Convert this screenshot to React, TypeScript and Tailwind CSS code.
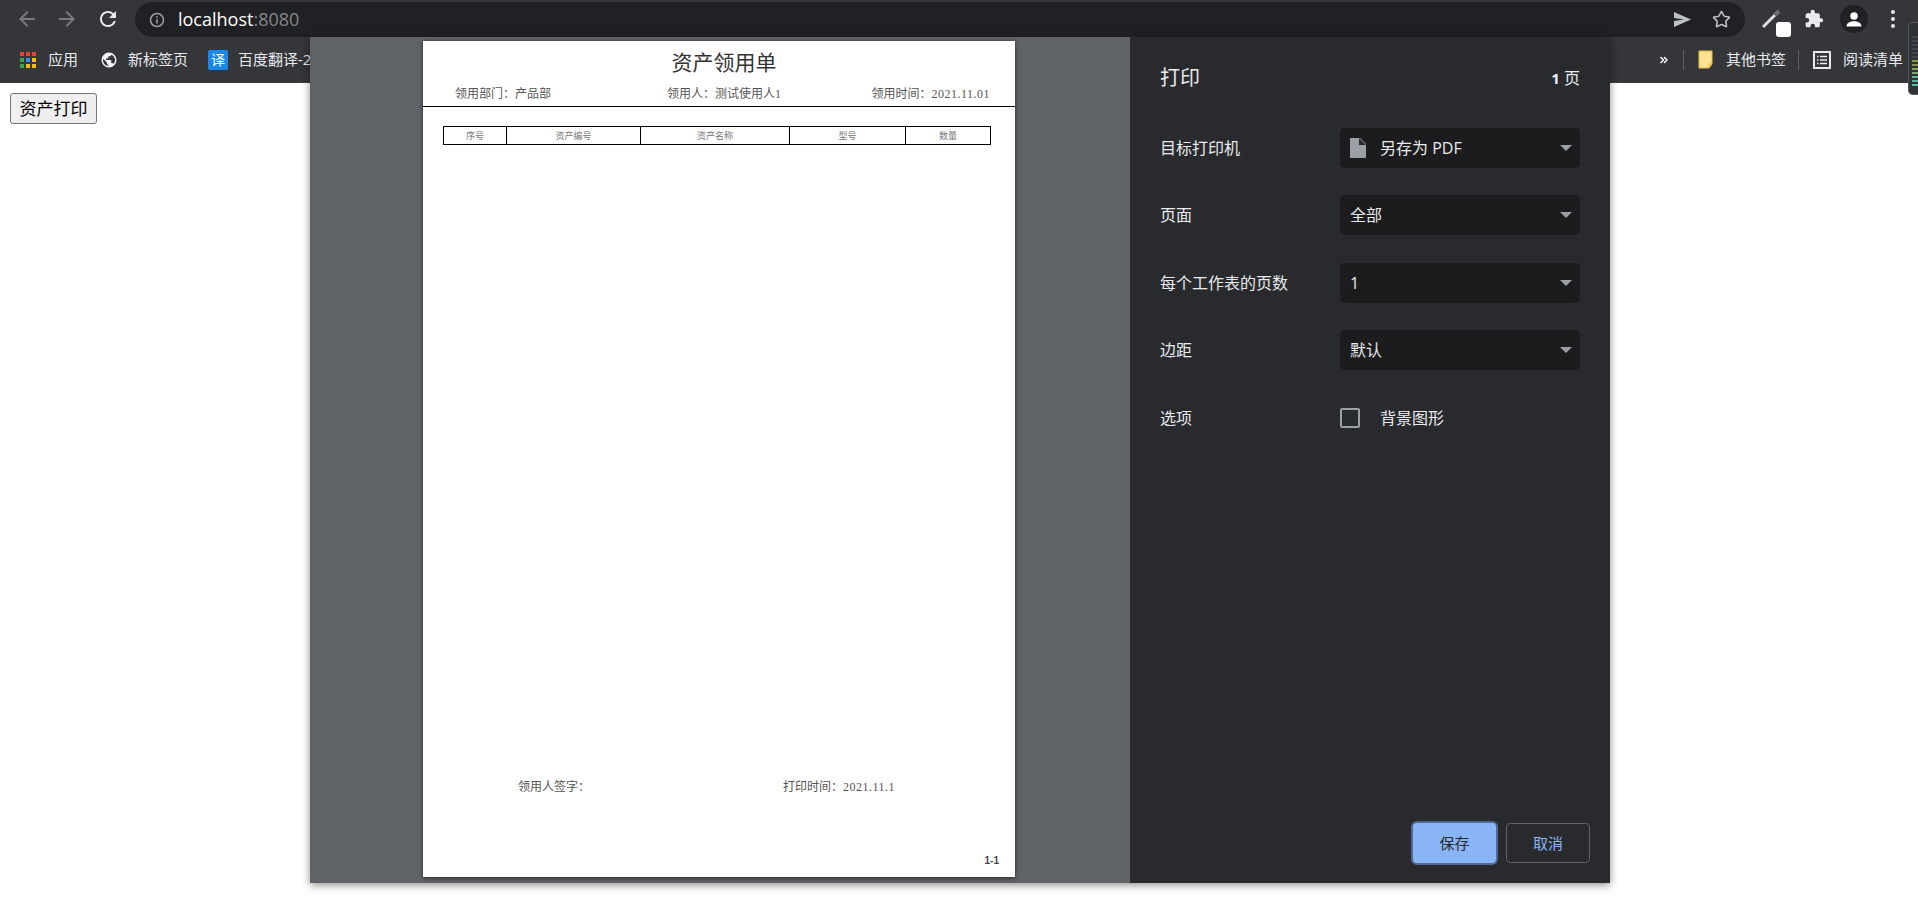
import { Star, ChevronsRight } from "lucide-react";

const ui = "font-['Open_Sans','Noto_Sans_CJK_SC',sans-serif]";
const digits = "font-['Liberation_Serif'] tracking-[0.5px]";

function AppsIcon() {
  const colors = ["#ea4335", "#ea4335", "#ea4335", "#34a853", "#4285f4", "#fbbc04", "#34a853", "#fbbc04", "#fbbc04"];
  return (
    <div className="grid grid-cols-3 gap-[2px] w-4 h-4">
      {colors.map((c, i) => (
        <span key={i} className="w-[4px] h-[4px]" style={{ background: c }} />
      ))}
    </div>
  );
}

function GlobeIcon() {
  return (
    <svg width="18" height="18" viewBox="0 0 24 24" fill="#f1f3f4">
      <path d="M12 2a10 10 0 1 0 0 20 10 10 0 0 0 0-20zM4 12c0-.6.1-1.2.2-1.8L9 15v1c0 1.100.9 2 2 2v1.900A8 8 0 0 1 4 12zm13.900 5.400c-.3-.8-1-1.400-1.900-1.400h-1v-3c0-.6-.4-1-1-1H8v-2h2c.6 0 1-.4 1-1V7h2c1.100 0 2-.9 2-2v-.4a8 8 0 0 1 2.900 12.800z" />
    </svg>
  );
}

function Select({ label, icon }: { label: string; icon?: boolean }) {
  return (
    <div className="w-[240px] h-10 rounded-[5px] bg-[#1c1c1e] flex items-center pl-[10px] pr-[8px] text-[16px] text-[#e8eaed]">
      {icon && (
        <svg width="18" height="22" viewBox="0 0 18 22" className="-ml-px mr-[13px]">
          <path d="M2 1h9l6 6v13a1 1 0 0 1-1 1H2a1 1 0 0 1-1-1V2a1 1 0 0 1 1-1z" fill="#9aa0a6" />
          <path d="M10 1v7h7z" fill="#2a2b2f" />
        </svg>
      )}
      <span className="flex-1">{label}</span>
      <span className="w-0 h-0 border-x-[6.500px] border-x-transparent border-t-[6.500px] border-t-[#9aa0a6]" />
    </div>
  );
}

function Row({ label, children }: { label: string; children: React.ReactNode }) {
  return (
    <div className="flex items-center h-10">
      <span className="w-[180px] text-[16px] text-[#e8eaed]">{label}</span>
      {children}
    </div>
  );
}

export default function App() {
  const cols = [
    { name: "序号", w: "w-[63px]" },
    { name: "资产编号", w: "w-[134px]" },
    { name: "资产名称", w: "w-[149px]" },
    { name: "型号", w: "w-[116px]" },
    { name: "数量", w: "flex-1" },
  ];
  const meter = ["#3f4650", "#3f4650", "#3f4650", "#3f4650", "#3f4650", "#3f4650", "#8c9440", "#8c9440", "#7fa650", "#6fae6a", "#5fb58a", "#52b89a", "#4fbfa5"];

  return (
    <div className={`${ui} relative w-[1918px] h-[905px] overflow-hidden bg-white`}>
      {/* browser toolbar */}
      <div className="h-[37px] bg-[#35363a] flex items-center pl-[15px] text-[#e8eaed]">
        <svg width="24" height="24" viewBox="0 0 24 24" fill="#77797d" className="shrink-0">
          <path d="M20 11H7.830l5.590-5.590L12 4l-8 8 8 8 1.410-1.410L7.830 13H20v-2z" />
        </svg>
        <svg width="24" height="24" viewBox="0 0 24 24" fill="#77797d" className="ml-4 shrink-0">
          <path d="M12 4l-1.410 1.410L16.170 11H4v2h12.170l-5.580 5.590L12 20l8-8z" />
        </svg>
        <svg width="24" height="24" viewBox="0 0 24 24" fill="#e8eaed" className="ml-[17px] shrink-0">
          <path d="M17.650 6.350A7.950 7.950 0 0 0 12 4c-4.420 0-7.990 3.580-7.990 8s3.570 8 7.990 8c3.730 0 6.840-2.550 7.730-6h-2.080A5.990 5.990 0 0 1 12 18c-3.310 0-6-2.690-6-6s2.690-6 6-6c1.660 0 3.140.690 4.220 1.780L13 11h7V4l-2.350 2.350z" />
        </svg>
        <div className="ml-[15px] mt-[2px] h-[35px] w-[1610px] shrink-0 rounded-full bg-[#202124] flex items-center pl-[14px] pr-[14px]">
          <svg width="16" height="16" viewBox="0 0 16 16" fill="none" stroke="#9aa0a6" strokeWidth="1.500">
            <circle cx="8" cy="8" r="6.500" />
            <path d="M8 7v4.500M8 4.300v1.500" />
          </svg>
          <span className="ml-[13px] text-[18px] text-white">
            localhost<span className="text-[#85888c]">:8080</span>
          </span>
          <span className="flex-1" />
          <svg width="17" height="15" viewBox="0 0 17 15" fill="#bdc1c6">
            <path d="M0 0l17 7.500L0 15V9l10-1.500L0 6z" />
          </svg>
          <Star size={19} className="text-[#bdc1c6] ml-[21px]" />
        </div>
        <div className="relative ml-[16px] w-[30px] h-[37px] shrink-0">
          <svg width="22" height="22" viewBox="0 0 22 22" className="absolute left-0 top-[8px]">
            <path d="M2 19L14 7" stroke="#dadce0" strokeWidth="3" />
            <path d="M14 7l4-4" stroke="#6b6e72" strokeWidth="4" />
          </svg>
          <span className="absolute left-[15px] top-[22px] w-[15px] h-[15px] rounded-[3px] bg-white" />
        </div>
        <svg width="20" height="20" viewBox="0 0 24 24" fill="#e8eaed" className="ml-[13px] shrink-0">
          <path d="M20.500 11H19V7a2 2 0 0 0-2-2h-4V3.500a2.500 2.500 0 0 0-5 0V5H4a2 2 0 0 0-2 2v3.800h1.500a2.700 2.700 0 0 1 0 5.400H2V20a2 2 0 0 0 2 2h3.800v-1.500a2.700 2.700 0 0 1 5.400 0V22H17a2 2 0 0 0 2-2v-4h1.500a2.500 2.500 0 0 0 0-5z" />
        </svg>
        <div className="ml-[16px] w-7 h-7 rounded-full bg-[#202124] flex items-center justify-center shrink-0">
          <svg width="18" height="18" viewBox="0 0 24 24" fill="#fff">
            <circle cx="12" cy="8" r="5" />
            <path d="M2 22c0-5 5-7 10-7s10 2 10 7z" />
          </svg>
        </div>
        <div className="ml-[23px] flex flex-col gap-[3px] shrink-0">
          <span className="w-[4px] h-[4px] rounded-full bg-[#e8eaed]" />
          <span className="w-[4px] h-[4px] rounded-full bg-[#e8eaed]" />
          <span className="w-[4px] h-[4px] rounded-full bg-[#e8eaed]" />
        </div>
      </div>

      {/* bookmarks bar */}
      <div className="h-[46px] bg-[#35363a] border-b border-b-[#3f4044] flex items-center pl-5 text-[15px] text-[#e8eaed]">
        <AppsIcon />
        <span className="ml-3">应用</span>
        <span className="ml-[22px]"><GlobeIcon /></span>
        <span className="ml-[10px]">新标签页</span>
        <span className="ml-5 w-5 h-5 rounded-[2px] bg-[#1a88e8] text-white text-[14px] leading-5 text-center">译</span>
        <span className="ml-[10px]">百度翻译-2</span>
        <span className="flex-1" />
        <ChevronsRight size={12} strokeWidth={3} className="text-white" />
        <span className="ml-[13px] w-px h-5 bg-[#5f6368]" />
        <svg width="16" height="19" viewBox="0 0 16 19" className="ml-[14px]">
          <path d="M1 1h13v13l-3 4H1z" fill="#fde293" stroke="#e8b93c" />
          <path d="M11 18v-4h3" fill="none" stroke="#e8b93c" />
        </svg>
        <span className="ml-[12px]">其他书签</span>
        <span className="ml-[12px] w-px h-5 bg-[#5f6368]" />
        <svg width="18" height="18" viewBox="0 0 18 18" fill="none" stroke="#e8eaed" className="ml-[14px]">
          <rect x="1" y="1" width="16" height="16" strokeWidth="2" />
          <path d="M4 5.500h1.500M7 5.500h7M4 9h1.500M7 9h7M4 12.500h1.500M7 12.500h7" strokeWidth="1.500" />
        </svg>
        <span className="ml-3 mr-[15px]">阅读清单</span>
      </div>

      {/* page */}
      <div className="pt-[10px] pl-[10px]">
        <button className="w-[87px] h-[31px] rounded-[3px] border border-[#767676] bg-[#efefef] text-[17px] text-black leading-none">
          资产打印
        </button>
      </div>

      {/* side widget */}
      <div className="absolute right-0 top-[22px] w-[10px] h-[73px] rounded-l-[5px] bg-[#2f3338] border border-[#53565b] border-r-0 flex flex-col justify-end gap-[2px] pl-[3px] pb-[8px]">
        {meter.map((c, i) => (
          <span key={i} className="h-[2px]" style={{ background: c }} />
        ))}
      </div>

      {/* print dialog */}
      <div className="absolute left-[310px] top-[37px] w-[1300px] h-[846px] flex shadow-[0_2px_8px_rgba(0,0,0,0.45)]">
        <div className="w-[820px] bg-[#5f6368] pt-1 pl-[113px]">
          <div className="w-[592px] h-[836px] bg-white flex flex-col shadow-[0_1px_4px_rgba(0,0,0,0.6)] font-['Noto_Sans_CJK_SC',serif]">
            <h1 className="mt-[5px] pl-[10px] text-center text-[21px] leading-[30px] text-[#333]">资产领用单</h1>
            <div className="mt-[9px] pl-8 pr-[25px] flex justify-between text-[12px] leading-4 text-[#555]">
              <span>领用部门：产品部</span>
              <span className="ml-[26px]">
                领用人：测试使用人<span className={digits}>1</span>
              </span>
              <span>
                领用时间：<span className={digits}>2021.11.01</span>
              </span>
            </div>
            <div className="mt-1 h-px bg-black" />
            <div className="mt-[19px] mx-5 w-[548px] h-[19px] border border-black flex text-[9px] leading-[17px] text-[#777]">
              {cols.map((c, i) => (
                <div key={c.name} className={`${c.w} text-center ${i < 4 ? "border-r border-r-black" : ""}`}>
                  {c.name}
                </div>
              ))}
            </div>
            <div className="flex-1" />
            <div className="flex text-[12px] leading-4 text-[#555] pl-[95px]">
              <span>领用人签字：</span>
              <span className="ml-[193px]">
                打印时间：<span className={digits}>2021.11.1</span>
              </span>
            </div>
            <div className="mt-[60px] mb-[10px] pr-4 text-right text-[10px] leading-3 font-bold text-[#444] font-['Liberation_Sans']">
              1-1
            </div>
          </div>
        </div>

        <div className="w-[480px] bg-[#292a2d] flex flex-col pl-[30px] pr-[30px] pb-[18px]">
          <div className="h-[91px] pt-[26px] flex items-start justify-between text-[#e8eaed]">
            <span className="text-[20px] leading-[30px]">打印</span>
            <span className="text-[16px] leading-[30px]">
              <b className="text-[#e8f0fe] text-[15px]">1</b> 页
            </span>
          </div>
          <div className="flex flex-col gap-[27.400px]">
            <Row label="目标打印机"><Select label="另存为 PDF" icon /></Row>
            <Row label="页面"><Select label="全部" /></Row>
            <Row label="每个工作表的页数"><Select label="1" /></Row>
            <Row label="边距"><Select label="默认" /></Row>
            <Row label="选项">
              <span className="w-5 h-5 rounded-[2px] border-2 border-[#9aa0a6]" />
              <span className="ml-5 text-[16px] text-[#e8eaed]">背景图形</span>
            </Row>
          </div>
          <div className="flex-1" />
          <div className="flex justify-end items-center gap-2 -mr-[10px]">
            <button className="w-[87px] h-[44px] rounded-[6px] bg-[#8ab4f8] border-2 border-[#4f6a92] text-[15px] text-[#292a2d]">
              保存
            </button>
            <button className="w-[84px] h-10 rounded-[4px] border border-[#5f6368] text-[15px] text-[#8ab4f8]">
              取消
            </button>
          </div>
        </div>
      </div>
    </div>
  );
}
